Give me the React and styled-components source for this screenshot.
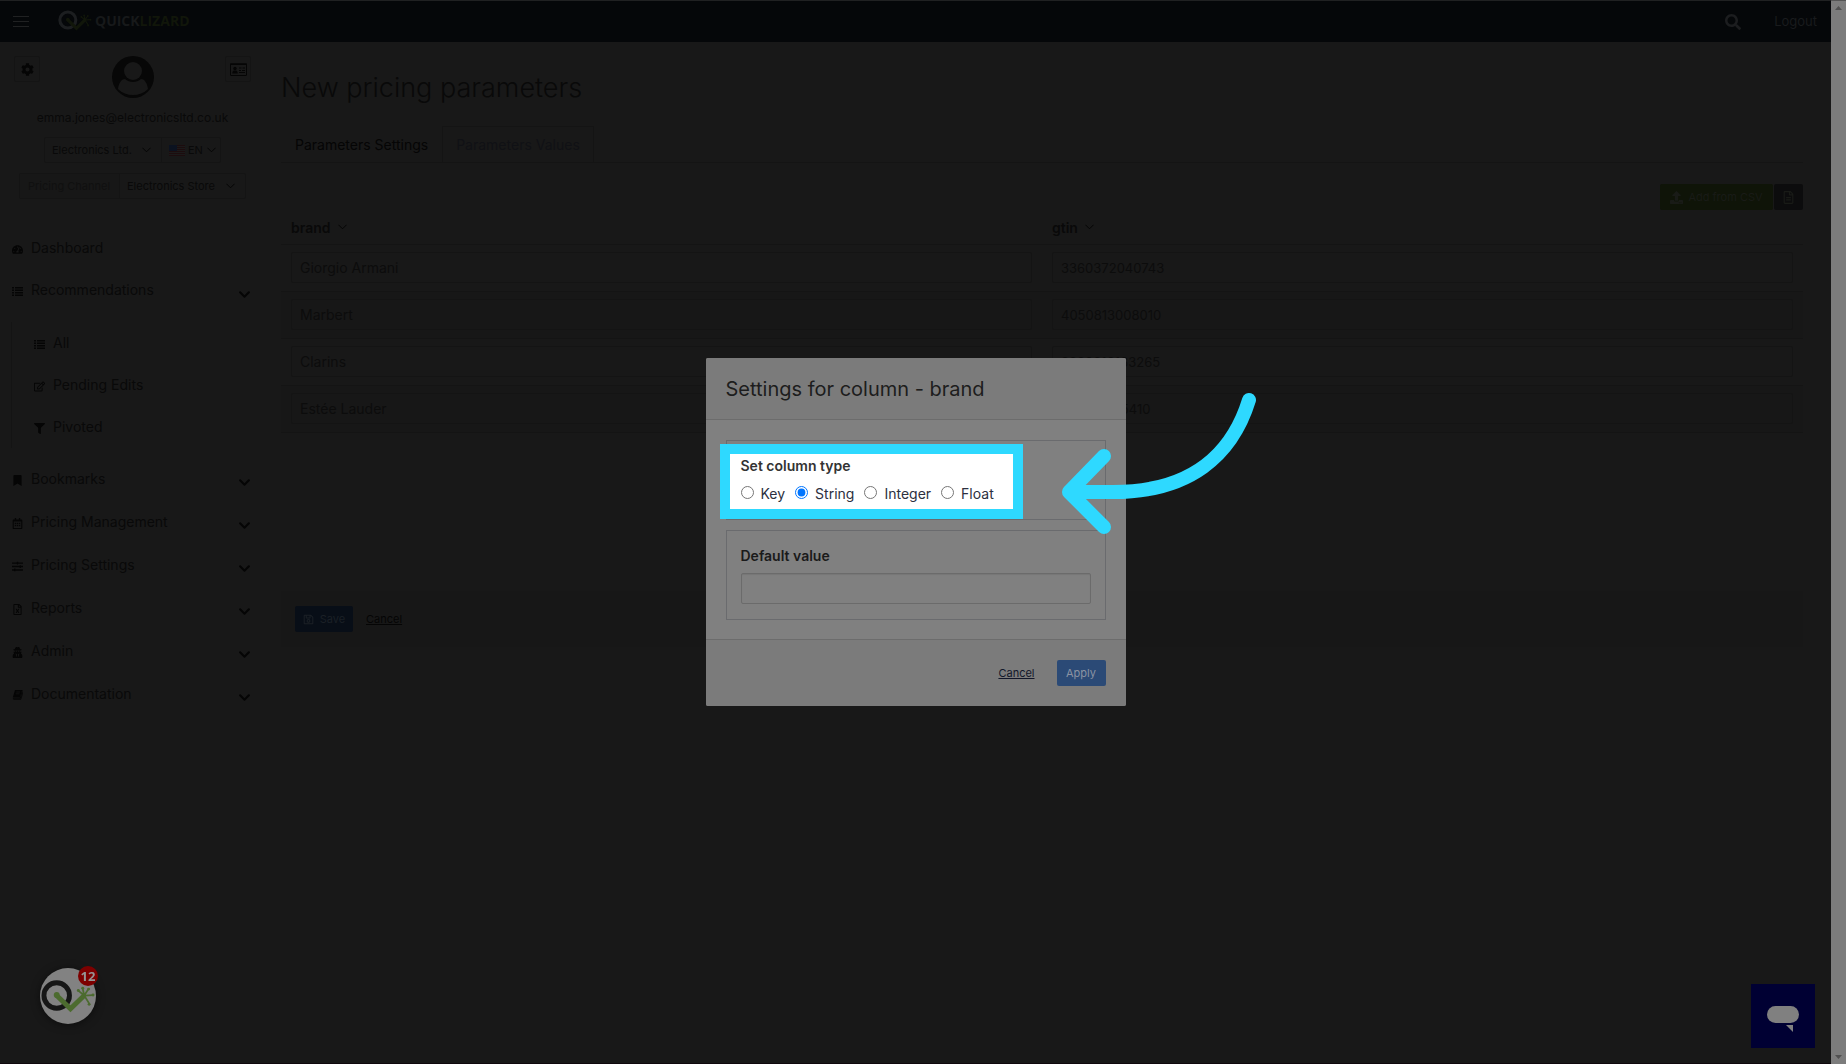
import React, { useState } from "react";
import styled, { createGlobalStyle } from "styled-components";
import {
  FaCog, FaTachometerAlt, FaRegEdit, FaFilter, FaBookmark,
  FaRegCalendarAlt, FaSlidersH, FaRegFileExcel, FaUserSecret,
  FaRegSave, FaSearch, FaUpload, FaRegFileAlt, FaChevronDown,
} from "react-icons/fa";

const c = {
  page: "#181818",
  stripe: "#171717",
  line: "#141414",
  text: "#090909",
  soft: "#0c0c0c",
  icon: "#050505",
  cyan: "#2ed9ff",
};

const Global = createGlobalStyle`
  *, *::before, *::after { box-sizing: border-box; }
  body { margin: 0; background: ${c.page}; font-size: 14px; line-height: 20px; }
  body, button, input, select { font-family: Inter, "Liberation Sans", sans-serif; }
  button, select, input { font-size: inherit; color: inherit; }
  button { cursor: pointer; padding: 0; border: 0; background: none; }
  h1, h2, ul, fieldset { margin: 0; padding: 0; }
  ul { list-style: none; }
  a { color: inherit; text-decoration: none; }
`;

const Shell = styled.div`
  display: flex;
  min-height: 100vh;
  color: ${c.text};
  background: ${c.page};
`;
const Page = styled.div`
  flex: 1;
  min-width: 0;
  border-bottom: 1px solid #0f080d;
`;
const ScrollTrack = styled.div`
  width: 15px;
  display: flex;
  flex-direction: column;
  justify-content: space-between;
  align-items: center;
  padding: 5px 0;
  background: #7c7c7c;
  border-top: 1px solid #555;
`;

/* top bar */
const TopBar = styled.header`
  display: flex;
  align-items: center;
  height: 42px;
  padding: 0 14px 0 13px;
  background: #050709;
  border-top: 1px solid #202122;
`;
const MenuButton = styled.button`
  display: grid;
  gap: 4px;
  width: 16px;
  margin-right: 29px;
  span { height: 1px; background: #202122; }
`;
const Brand = styled.a`
  display: flex;
  align-items: center;
  gap: 2px;
  flex: 1;
  font: 700 14px/20px "Open Sans", "Noto Sans", sans-serif;
  color: #17191a;
  span span { color: #11160a; }
`;
const BrandName = styled.span`
  padding-bottom: 2px;
`;
const SearchButton = styled.button`
  display: flex;
  margin-right: 33px;
  font-size: 16px;
  color: #1c1d1f;
`;
const Logout = styled.a`
  padding-bottom: 2px;
  font-size: 13px;
  color: #191b1d;
`;

/* sidebar */
const Body = styled.div`
  display: flex;
  align-items: flex-start;
`;
const Sidebar = styled.aside`
  width: 265px;
  flex: none;
  padding-top: 14px;
`;
const Profile = styled.div`
  display: flex;
  justify-content: space-between;
  align-items: flex-start;
  padding: 0 14px;
`;
const SquareButton = styled.button`
  display: grid;
  place-items: center;
  width: 26px;
  height: 26px;
  border: 1px solid ${c.line};
  border-radius: 2px;
  font-size: 13px;
  color: ${c.icon};
`;
const Email = styled.div`
  margin-top: 10px;
  text-align: center;
  font-size: 12px;
`;
const Pickers = styled.div`
  display: flex;
  align-items: stretch;
  width: fit-content;
  height: 26px;
  margin: ${(p) => p.$top}px auto 0;
  border: 1px solid ${c.line};
  border-radius: 2px;
  font-size: 11px;
`;
const Picker = styled.label`
  display: flex;
  align-items: center;
  gap: 3px;
  width: ${(p) => p.$w}px;
  padding: 0 ${(p) => p.$right}px 0 7px;
  & + & { border-left: 1px solid ${c.line}; }
  svg { flex: none; }
`;
const PickerSelect = styled.select`
  flex: 1;
  min-width: 0;
  appearance: none;
  border: 0;
  padding: 0;
  background: none;
`;
const PickerLabel = styled.span`
  width: 100px;
  padding: 2px 8px;
  white-space: nowrap;
  color: #101010;
  background: ${c.stripe};
  border-right: 1px solid ${c.line};
`;
const Nav = styled.nav`
  margin-top: 28px;
`;
const NavLink = styled.a`
  display: flex;
  align-items: center;
  gap: 8px;
  height: ${(p) => (p.$tall ? 43 : 42)}px;
  padding: 0 14px 0 12px;
`;
const NavIcon = styled.span`
  display: grid;
  place-items: center;
  width: 11px;
  padding-top: 3px;
  font-size: 11px;
  color: ${c.icon};
`;
const NavText = styled.span`
  flex: 1;
`;
const NavArrow = styled(FaChevronDown)`
  margin-top: 8px;
  font-size: 13px;
  color: ${c.icon};
`;
const SubNav = styled.ul`
  margin: 11px 0 9px 11px;
  padding-left: 10px;
  border-left: 1px solid ${c.line};
`;

/* main */
const Main = styled.main`
  flex: 1;
  min-width: 0;
  padding: 28px 28px 0 16px;
`;
const Title = styled.h1`
  font-size: 27px;
  line-height: 36px;
  font-weight: 300;
  color: ${c.text};
`;
const Tabs = styled.div`
  display: flex;
  margin-top: 20px;
  border-bottom: 1px solid ${c.line};
`;
const Tab = styled.button`
  height: 36px;
  padding: 0 13px;
  color: ${(p) => (p.$active ? c.icon : "#101115")};
  border: 1px solid ${(p) => (p.$active ? "transparent" : c.line)};
  border-bottom: 0;
`;
const Tools = styled.div`
  display: flex;
  justify-content: flex-end;
  gap: 1px;
  margin-top: 21px;
`;
const ToolButton = styled.button`
  display: flex;
  align-items: center;
  justify-content: center;
  gap: 5px;
  width: ${(p) => p.$w}px;
  height: 26px;
  border-radius: 2px;
  font-size: 11px;
  color: #191b17;
  background: ${(p) => p.$bg};
  svg { font-size: 13px; }
`;
const TableArea = styled.div`
  min-height: 381px;
`;
const Table = styled.table`
  width: 100%;
  table-layout: fixed;
  border-collapse: separate;
  border-spacing: 0;
  th {
    height: 34px;
    padding: 0 10px;
    text-align: left;
  }
  td {
    height: 47px;
    padding: 7px 10px 8px;
    border-top: 1px solid ${c.line};
  }
  tbody tr:nth-child(even) { background: ${c.stripe}; }
  tbody tr:last-child td { border-bottom: 1px solid ${c.line}; }
`;
const ColumnButton = styled.button`
  display: flex;
  align-items: center;
  gap: 7px;
  font-size: 14px;
  font-weight: 600;
`;
const Cell = styled.input`
  display: block;
  width: 100%;
  height: 31px;
  padding: 0 8px;
  border: 1px solid ${c.line};
  border-radius: 2px;
  background: transparent;
  font-size: ${(p) => (p.$numeric ? 13 : 14)}px;
  color: ${c.soft};
`;
const SaveBar = styled.div`
  display: flex;
  align-items: center;
  gap: 13px;
  height: 56px;
  padding: 0 14px;
  background: ${c.stripe};
  font-size: 11px;
  a { text-decoration: underline; color: ${c.icon}; }
`;

/* dialog */
const Overlay = styled.div`
  position: fixed;
  inset: 0 15px 0 0;
  display: grid;
  place-items: center;
`;
const Dialog = styled.section`
  position: relative;
  width: 420px;
  background: #808080;
  border-radius: 2px;
  color: #1d1d1d;
`;
const DialogHead = styled.header`
  padding: 17px 20px 16px;
  background: #7b7b7b;
  border-bottom: 1px solid #6c6c6c;
  border-radius: 2px 2px 0 0;
`;
const DialogTitle = styled.h2`
  font-size: 20px;
  line-height: 28px;
  font-weight: 400;
`;
const DialogBody = styled.div`
  display: grid;
  gap: 10px;
  padding: 20px 20px 19px;
`;
const Group = styled.fieldset`
  position: relative;
  min-width: 0;
  padding: 15px 14px;
  border: 1px solid #6a6b6e;
`;
const Spotlight = styled.div`
  position: absolute;
  top: 3px;
  left: -7px;
  width: 303px;
  height: 75px;
  background: #fff;
  border: 10px solid ${c.cyan};
`;
const GroupTitle = styled.div`
  display: block;
  position: relative;
  font-weight: 600;
  color: ${(p) => (p.$lit ? "#333" : "#1a1a1a")};
`;
const Radios = styled.div`
  position: relative;
  display: flex;
  gap: 10px;
  margin-top: 8px;
`;
const RadioLabel = styled.label`
  display: flex;
  align-items: center;
  gap: 7px;
  color: #2c3040;
  input { width: 13px; height: 13px; margin: 0 0 3px; accent-color: #0075ff; }
`;
const ValueInput = styled.input`
  display: block;
  width: 100%;
  height: 31px;
  margin-top: 7px;
  padding: 0 8px;
  border: 1px solid #6b6b6b;
  border-radius: 2px;
  background: #808080;
  box-shadow: inset 0 1px 1px rgba(0, 0, 0, 0.08);
`;
const DialogFoot = styled.footer`
  display: flex;
  align-items: center;
  justify-content: flex-end;
  gap: 22px;
  padding: 20px;
  background: #7b7b7b;
  border-top: 1px solid #6c6c6c;
  border-radius: 0 0 2px 2px;
  font-size: 11px;
  a { text-decoration: underline; color: #12172a; }
`;
const Primary = styled.button`
  display: flex;
  align-items: center;
  justify-content: center;
  gap: 6px;
  width: ${(p) => p.$w}px;
  height: 26px;
  border-radius: 2px;
  font-size: 11px;
  color: ${(p) => (p.$dim ? "#1b2026" : "#8a93a3")};
  background: ${(p) => (p.$dim ? "#080e17" : "#2b4a76")};
`;
const Arrow = styled.svg`
  position: absolute;
  left: 350px;
  top: 30px;
`;

/* floating launchers */
const HelpLauncher = styled.button`
  position: fixed;
  left: 40px;
  bottom: 40px;
  width: 56px;
  height: 56px;
  border-radius: 50%;
  background: #828282;
  box-shadow: 0 1px 8px rgba(0, 0, 0, 0.5);
`;
const Badge = styled.span`
  position: absolute;
  top: -2px;
  right: -2px;
  width: 20px;
  height: 20px;
  border-radius: 50%;
  background: #7d0000;
  color: #959595;
  font: 700 13px/20px "Noto Sans", sans-serif;
  text-align: center;
`;
const ChatLauncher = styled.button`
  position: fixed;
  right: 31px;
  bottom: 16px;
  width: 64px;
  height: 64px;
  background: #000033;
`;

function LizardMark({ ring, green }) {
  return (
    <g fill="none">
      <circle cx="17" cy="17" r="13" stroke={ring} strokeWidth="5" />
      <path d="M17 17L31 30.500L45 17" stroke={green} strokeWidth="5" />
      <circle cx="17" cy="16.500" r="3" fill={green} />
      <g stroke={green} strokeWidth="1.800" strokeLinecap="round">
        <path d="M45 17L39 12M45 17L43.500 10M45 17L49 11M45 17L54 16.500M45 17L50 25" />
      </g>
      <g fill={green}>
        <circle cx="39" cy="12" r="1.500" /><circle cx="43.500" cy="9.500" r="1.500" />
        <circle cx="49.500" cy="10.500" r="1.500" /><circle cx="54" cy="16.500" r="1.500" />
        <circle cx="50" cy="26" r="1.500" />
      </g>
    </g>
  );
}

function Chevron() {
  return (
    <svg width="9" height="6" viewBox="0 0 9 6" fill="none" stroke={c.icon} aria-hidden="true">
      <path d="M0.500 0.800L4.500 4.800L8.500 0.800" />
    </svg>
  );
}

function ListIcon() {
  return (
    <svg width="11" height="9" viewBox="0 0 11 9" fill="currentColor" aria-hidden="true">
      <path d="M0 0h2v1.500H0zM3 0h8v1.500H3zM0 2.500h2V4H0zM3 2.500h8V4H3zM0 5h2v1.500H0zM3 5h8v1.500H3zM0 7.500h2V9H0zM3 7.500h8V9H3z" />
    </svg>
  );
}

function BookIcon() {
  return (
    <svg width="11" height="10" viewBox="0 0 11 10" aria-hidden="true">
      <path d="M3.500 0.500H10.300L8.200 8.300H1.600C1 9 1.500 9.400 2 9.400H8.800L11 2" fill="none" stroke="currentColor" strokeWidth="0.800" />
      <path d="M3 0H10L8 7.600H0.800Z" fill="currentColor" />
      <path d="M4.200 2H8M3.700 3.800H7.500" stroke={c.page} strokeWidth="0.700" />
    </svg>
  );
}

function CardIcon() {
  return (
    <svg width="17" height="13" viewBox="0 0 17 13" aria-hidden="true">
      <rect x="0.500" y="1" width="16" height="11.500" rx="0.500" fill="none" stroke="currentColor" />
      <path d="M0 0.500H17V2H0Z" fill="currentColor" />
      <circle cx="5" cy="5.500" r="1.700" fill="currentColor" />
      <path d="M2.300 10.500C2.300 8 3.300 7.500 5 7.500S7.700 8 7.700 10.500Z" fill="currentColor" />
      <path d="M9 5H11.500M12.500 5H15M9 7.500H11M12 7.500H15M9 9.500H15" stroke="currentColor" />
    </svg>
  );
}

function Flag() {
  return (
    <svg width="16" height="11" viewBox="0 0 16 11" aria-hidden="true">
      <rect width="16" height="11" fill="#1b1a1a" />
      {[0, 2, 4, 6, 8, 10].map((y) => <rect key={y} y={y} width="16" height="1" fill="#1c0c0e" />)}
      <rect width="8" height="6" fill="#0b1220" />
    </svg>
  );
}

const links = [
  [FaBookmark, "Bookmarks"],
  [FaRegCalendarAlt, "Pricing Management"],
  [FaSlidersH, "Pricing Settings"],
  [FaRegFileExcel, "Reports"],
  [FaUserSecret, "Admin"],
  [BookIcon, "Documentation"],
];
const subLinks = [[ListIcon, "All"], [FaRegEdit, "Pending Edits"], [FaFilter, "Pivoted"]];
const rows = [
  ["Giorgio Armani", "3360372040743"],
  ["Marbert", "4050813008010"],
  ["Clarins", "3380810163265"],
  ["Estée Lauder", "887167485410"],
];

function NavItem({ icon: Icon, text, arrow, tall }) {
  return (
    <NavLink href="#" $tall={tall}>
      <NavIcon><Icon /></NavIcon>
      <NavText>{text}</NavText>
      {arrow && <NavArrow />}
    </NavLink>
  );
}

export default function App() {
  const [type, setType] = useState("String");
  return (
    <>
      <Global />
      <Shell>
        <Page>
          <TopBar>
            <MenuButton aria-label="Menu"><span /><span /><span /></MenuButton>
            <Brand href="#">
              <svg width="35" height="23" viewBox="1 1 57 37" aria-hidden="true">
                <LizardMark ring="#1c1e20" green="#11160a" />
              </svg>
              <BrandName>QUICK<span>LIZARD</span></BrandName>
            </Brand>
            <SearchButton aria-label="Search"><FaSearch /></SearchButton>
            <Logout href="#">Logout</Logout>
          </TopBar>
          <Body>
            <Sidebar>
              <Profile>
                <SquareButton aria-label="Account settings"><FaCog /></SquareButton>
                <svg width="42" height="42" viewBox="0 0 42 42" aria-hidden="true">
                  <circle cx="21" cy="21" r="21" fill="#070707" />
                  <circle cx="21" cy="15" r="9" fill={c.page} />
                  <path d="M6 33C7 26 10 23 13 23C17 27 25 27 29 23C32 23 35 26 36 33C28 41 14 41 6 33Z" fill={c.page} />
                </svg>
                <SquareButton aria-label="Contact card"><CardIcon /></SquareButton>
              </Profile>
              <Email>emma.jones@electronicsltd.co.uk</Email>
              <Pickers $top={9}>
                <Picker $w={116} $right={10}>
                  <PickerSelect aria-label="Company"><option>Electronics Ltd.</option></PickerSelect>
                  <Chevron />
                </Picker>
                <Picker $w={59} $right={4}>
                  <Flag />
                  <PickerSelect aria-label="Language"><option>EN</option></PickerSelect>
                  <Chevron />
                </Picker>
              </Pickers>
              <Pickers $top={10}>
                <PickerLabel>Pricing Channel</PickerLabel>
                <Picker $w={125} $right={10}>
                  <PickerSelect aria-label="Pricing Channel"><option>Electronics Store</option></PickerSelect>
                  <Chevron />
                </Picker>
              </Pickers>
              <Nav>
                <NavItem icon={FaTachometerAlt} text="Dashboard" />
                <NavItem icon={ListIcon} text="Recommendations" arrow />
                <SubNav>
                  {subLinks.map(([icon, text]) => <li key={text}><NavItem icon={icon} text={text} /></li>)}
                </SubNav>
                {links.map(([icon, text]) => <NavItem key={text} icon={icon} text={text} arrow tall />)}
              </Nav>
            </Sidebar>
            <Main>
              <Title>New pricing parameters</Title>
              <Tabs>
                <Tab $active>Parameters Settings</Tab>
                <Tab>Parameters Values</Tab>
              </Tabs>
              <Tools>
                <ToolButton $w={113} $bg="#0f1408"><FaUpload />Add from CSV</ToolButton>
                <ToolButton $w={29} $bg="#0c0c0d" aria-label="Download template"><FaRegFileAlt /></ToolButton>
              </Tools>
              <TableArea>
                <Table>
                  <thead>
                    <tr>
                      {["brand", "gtin"].map((name) => (
                        <th key={name}><ColumnButton>{name}<Chevron /></ColumnButton></th>
                      ))}
                    </tr>
                  </thead>
                  <tbody>
                    {rows.map(([brand, gtin]) => (
                      <tr key={brand}>
                        <td><Cell aria-label="brand" defaultValue={brand} /></td>
                        <td><Cell aria-label="gtin" $numeric defaultValue={gtin} /></td>
                      </tr>
                    ))}
                  </tbody>
                </Table>
              </TableArea>
              <SaveBar>
                <Primary $w={58} $dim><FaRegSave />Save</Primary>
                <a href="#">Cancel</a>
              </SaveBar>
            </Main>
          </Body>
        </Page>
        <ScrollTrack aria-hidden="true">
          <svg width="7" height="4" viewBox="0 0 7 4"><path d="M0 4L3.500 0L7 4Z" fill="#505050" /></svg>
          <svg width="7" height="4" viewBox="0 0 7 4"><path d="M0 0L3.500 4L7 0Z" fill="#505050" /></svg>
        </ScrollTrack>
      </Shell>

      <HelpLauncher aria-label="Help center">
        <svg width="56" height="56" viewBox="0 -11 57 57" aria-hidden="true">
          <LizardMark ring="#161616" green="#4c6b2f" />
        </svg>
        <Badge>12</Badge>
      </HelpLauncher>

      <Overlay>
        <Dialog role="dialog" aria-labelledby="dialog-title">
          <DialogHead><DialogTitle id="dialog-title">Settings for column - brand</DialogTitle></DialogHead>
          <DialogBody>
            <Group aria-labelledby="type-title">
              <Spotlight />
              <GroupTitle $lit id="type-title">Set column type</GroupTitle>
              <Radios>
                {["Key", "String", "Integer", "Float"].map((name) => (
                  <RadioLabel key={name}>
                    <input type="radio" name="type" checked={type === name} onChange={() => setType(name)} />
                    {name}
                  </RadioLabel>
                ))}
              </Radios>
            </Group>
            <Group>
              <GroupTitle as="label" htmlFor="default-value">Default value</GroupTitle>
              <ValueInput id="default-value" />
            </Group>
          </DialogBody>
          <DialogFoot>
            <a href="#">Cancel</a>
            <Primary $w={49}>Apply</Primary>
          </DialogFoot>
          <Arrow width="204" height="160" viewBox="1056 388 204 160" aria-hidden="true">
            <path
              d="M1249 400C1232 455 1190 493 1110 492L1069 492M1104 456L1069 492L1104 527"
              fill="none" stroke={c.cyan} strokeWidth="14" strokeLinecap="round" strokeLinejoin="round"
            />
          </Arrow>
        </Dialog>
      </Overlay>

      <ChatLauncher aria-label="Open chat">
        <svg width="64" height="64" viewBox="0 0 64 64" aria-hidden="true">
          <rect x="16" y="22" width="32" height="17" rx="8.500" fill="#808080" />
          <path d="M35 41H42V48Z" fill="#808080" />
        </svg>
      </ChatLauncher>
    </>
  );
}
